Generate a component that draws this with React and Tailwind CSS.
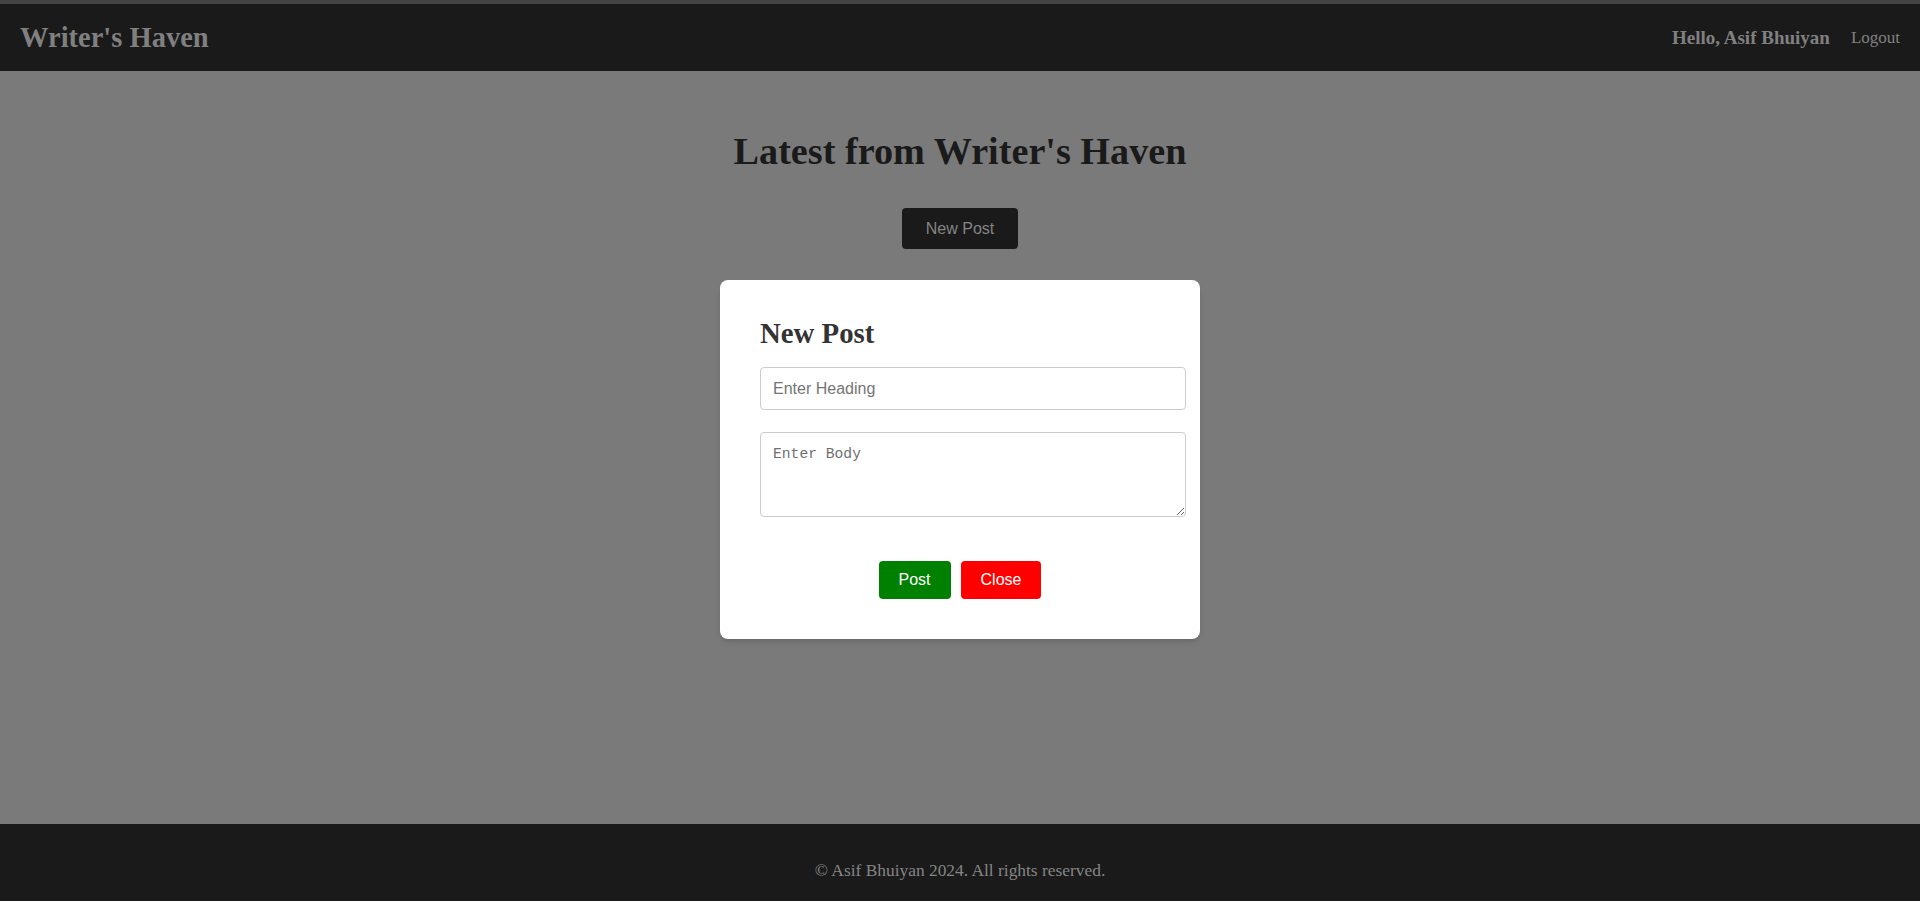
export default function App() {
  const serif = { fontFamily: '"Liberation Serif", "Times New Roman", serif' };
  return (
    <div className="h-[901px] flex flex-col bg-[#7a7a7a] overflow-hidden" style={serif}>
      <div className="h-[4px] bg-[#444444] shrink-0" />
      <header className="h-[67px] shrink-0 bg-[#1a1a1a] flex items-center justify-between px-[20px]">
        <div className="text-[28.5px] font-bold leading-[32px] text-[#808080] pt-[1px]">Writer's Haven</div>
        <nav className="flex items-center gap-[21px] text-[#808080]">
          <span className="text-[19px] font-bold leading-[22px]">Hello, Asif Bhuiyan</span>
          <span className="text-[17px] leading-[22px]">Logout</span>
        </nav>
      </header>
      <main className="flex-1 flex flex-col items-center pt-[58px]">
        <h1 className="text-[38.2px] font-bold leading-[44px] text-[#1a1a1a]">Latest from Writer's Haven</h1>
        <button
          className="mt-[35px] w-[116px] h-[41px] rounded-[4px] bg-[#1a1a1a] text-[#858585] text-[16px]"
          style={{ fontFamily: '"Liberation Sans", Arial, sans-serif' }}
        >
          New Post
        </button>
        <div className="mt-[31px] w-[480px] bg-white rounded-[8px] shadow-md pt-[37px] pb-[40px] pl-[40px]">
          <h2 className="text-[28.8px] font-bold leading-[32px] text-[#333333]">New Post</h2>
          <input
            className="mt-[18px] block w-[426px] h-[43px] border border-[#cccccc] rounded-[4px] px-[12px] text-[16px] text-[#333] placeholder:text-[#757575] outline-none"
            style={{ fontFamily: '"Liberation Sans", Arial, sans-serif' }}
            placeholder="Enter Heading"
          />
          <textarea
            className="mt-[22px] block w-[426px] h-[85px] border border-[#cccccc] rounded-[4px] px-[12px] pt-[13px] text-[14.67px] leading-[17px] text-[#333] placeholder:text-[#6f6f6f] outline-none resize"
            style={{ fontFamily: '"Liberation Mono", "Courier New", monospace' }}
            placeholder="Enter Body"
          />
          <div
            className="mt-[44px] flex justify-center gap-[10px] pr-[40px]"
            style={{ fontFamily: '"Liberation Sans", Arial, sans-serif' }}
          >
            <button className="h-[38px] px-[20px] rounded-[4px] bg-[#008000] text-white text-[16px]">Post</button>
            <button className="h-[38px] px-[20px] rounded-[4px] bg-[#ff0000] text-white text-[16px]">Close</button>
          </div>
        </div>
      </main>
      <footer className="h-[77px] shrink-0 bg-[#1a1a1a] flex justify-center pt-[36px]">
        <p className="text-[17.4px] leading-[20px] text-[#858585]">© Asif Bhuiyan 2024. All rights reserved.</p>
      </footer>
    </div>
  );
}
